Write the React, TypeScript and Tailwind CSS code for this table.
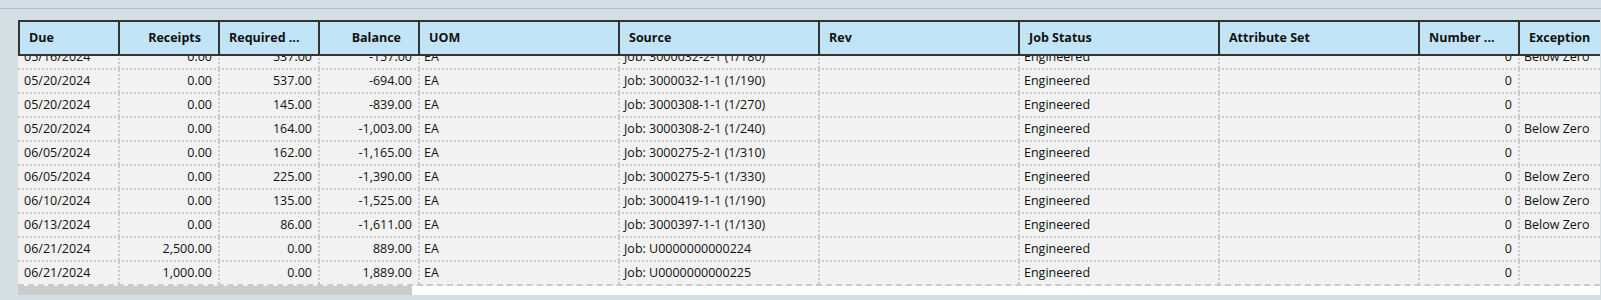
type Col = { key: string; title: string; width: string; align: 'left' | 'right' };

const columns: Col[] = [
  { key: 'due', title: 'Due', width: 'w-[100px]', align: 'left' },
  { key: 'receipts', title: 'Receipts', width: 'w-[100px]', align: 'right' },
  { key: 'required', title: 'Required ...', width: 'w-[100px]', align: 'right' },
  { key: 'balance', title: 'Balance', width: 'w-[100px]', align: 'right' },
  { key: 'uom', title: 'UOM', width: 'w-[200px]', align: 'left' },
  { key: 'source', title: 'Source', width: 'w-[200px]', align: 'left' },
  { key: 'rev', title: 'Rev', width: 'w-[200px]', align: 'left' },
  { key: 'status', title: 'Job Status', width: 'w-[200px]', align: 'left' },
  { key: 'attr', title: 'Attribute Set', width: 'w-[200px]', align: 'left' },
  { key: 'number', title: 'Number ...', width: 'w-[100px]', align: 'right' },
  { key: 'exception', title: 'Exception', width: 'w-[100px]', align: 'left' },
];

// header "Required ..." and "Number ..." are left aligned even though the data is right aligned
const headerLeft = ['due', 'required', 'uom', 'source', 'rev', 'status', 'attr', 'number', 'exception'];

const rows: Record<string, string>[] = [
  { due: '05/16/2024', receipts: '0.00', required: '537.00', balance: '-157.00', uom: 'EA', source: 'Job: 3000032-2-1 (1/180)', status: 'Engineered', number: '0', exception: 'Below Zero' },
  { due: '05/20/2024', receipts: '0.00', required: '537.00', balance: '-694.00', uom: 'EA', source: 'Job: 3000032-1-1 (1/190)', status: 'Engineered', number: '0', exception: '' },
  { due: '05/20/2024', receipts: '0.00', required: '145.00', balance: '-839.00', uom: 'EA', source: 'Job: 3000308-1-1 (1/270)', status: 'Engineered', number: '0', exception: '' },
  { due: '05/20/2024', receipts: '0.00', required: '164.00', balance: '-1,003.00', uom: 'EA', source: 'Job: 3000308-2-1 (1/240)', status: 'Engineered', number: '0', exception: 'Below Zero' },
  { due: '06/05/2024', receipts: '0.00', required: '162.00', balance: '-1,165.00', uom: 'EA', source: 'Job: 3000275-2-1 (1/310)', status: 'Engineered', number: '0', exception: '' },
  { due: '06/05/2024', receipts: '0.00', required: '225.00', balance: '-1,390.00', uom: 'EA', source: 'Job: 3000275-5-1 (1/330)', status: 'Engineered', number: '0', exception: 'Below Zero' },
  { due: '06/10/2024', receipts: '0.00', required: '135.00', balance: '-1,525.00', uom: 'EA', source: 'Job: 3000419-1-1 (1/190)', status: 'Engineered', number: '0', exception: 'Below Zero' },
  { due: '06/13/2024', receipts: '0.00', required: '86.00', balance: '-1,611.00', uom: 'EA', source: 'Job: 3000397-1-1 (1/130)', status: 'Engineered', number: '0', exception: 'Below Zero' },
  { due: '06/21/2024', receipts: '2,500.00', required: '0.00', balance: '889.00', uom: 'EA', source: 'Job: U0000000000224', status: 'Engineered', number: '0', exception: '' },
  { due: '06/21/2024', receipts: '1,000.00', required: '0.00', balance: '1,889.00', uom: 'EA', source: 'Job: U0000000000225', status: 'Engineered', number: '0', exception: '' },
];

function HeaderRow() {
  return (
    <div className="flex w-max h-[36px] bg-[#c1e4f6] border-2 border-r-0 border-[#333]">
      {columns.map((c) => (
        <div
          key={c.key}
          className={`${c.width} shrink-0 border-r-2 border-[#333] flex items-center font-bold text-[#111] ${
            headerLeft.includes(c.key) ? 'justify-start pl-[9px]' : 'justify-end pr-[17px]'
          }`}
        >
          {c.title}
        </div>
      ))}
    </div>
  );
}

function DataRow({ row, last }: { row: Record<string, string>; last: boolean }) {
  return (
    <div className={`flex w-max h-[24px] pl-[2px] bg-[#f2f2f2] border-b-2 border-[#cbcbcb] ${last ? 'border-dashed' : 'border-dotted'}`}>
      {columns.map((c) => (
        <div
          key={c.key}
          className={`${c.width} shrink-0 border-r-2 border-dotted border-[#cbcbcb] flex items-center whitespace-nowrap text-[#111] pl-[4px] pr-[6px] ${
            c.align === 'right' ? 'justify-end' : 'justify-start'
          }`}
        >
          {row[c.key] ?? ''}
        </div>
      ))}
    </div>
  );
}

export default function App() {
  return (
    <div className="w-[1601px] h-[300px] bg-[#d3dfe5] overflow-hidden text-[12.5px] font-['Open_Sans',sans-serif]">
      <div className="h-[8px]" />
      <div className="h-[1px] bg-[#9ec4d2]" />
      <div className="pl-[18px] pt-[11px]">
        <div className="w-[1582px] overflow-hidden bg-white">
          <HeaderRow />
          {/* body is scrolled down a little, so the first row sits under the header */}
          <div className="h-[230px] overflow-hidden">
            <div className="-mt-[10px]">
              {rows.map((r, i) => (
                <DataRow key={i} row={r} last={i === rows.length - 1} />
              ))}
            </div>
          </div>
          {/* horizontal scrollbar */}
          <div className="h-[9px] bg-white">
            <div className="h-full w-[394px] bg-[#cbcbcb]" />
          </div>
        </div>
      </div>
    </div>
  );
}
